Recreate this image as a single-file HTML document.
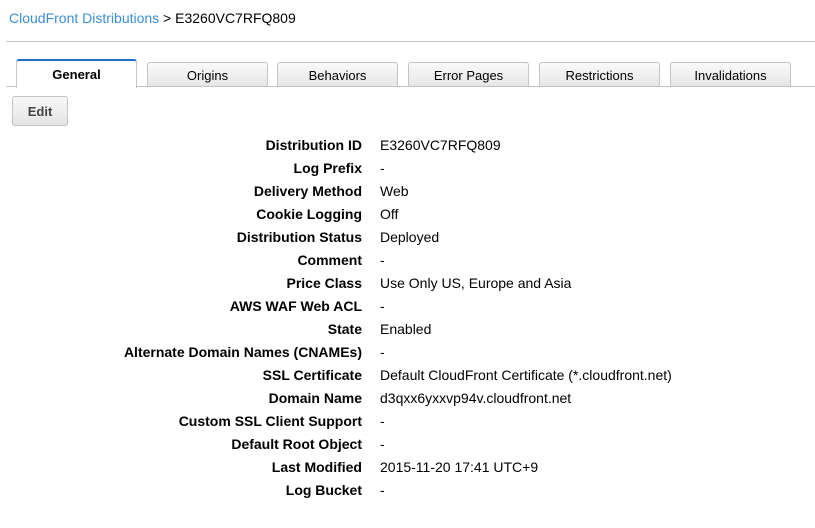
<!DOCTYPE html>
<html><head><meta charset="utf-8"><style>
body{margin:0;width:815px;height:528px;background:#fff;font-family:"Liberation Sans",Arial,sans-serif;font-size:14px;color:#000;position:relative;overflow:hidden}
.bc{position:absolute;left:9px;top:10px}
.bc a{color:#3a8fd8;text-decoration:none}
.hr{position:absolute;left:6px;right:0;top:41px;height:1px;background:#c4c4c4}
.tl{position:absolute;left:6px;right:0;top:86px;height:1px;background:#c4c4c4}
.tab{position:absolute;top:62px;height:23px;width:119px;border:1px solid #c4c4c4;border-bottom:none;border-radius:3px 3px 0 0;background:linear-gradient(#fafafa,#e6e6e6);text-align:center;line-height:25px;font-size:13px}
.tab.act{top:59px;height:27px;background:#fff;border-top:2px solid #1f6fc9;font-weight:bold;line-height:28px;z-index:2;width:119px}
.edit{position:absolute;left:12px;top:96px;width:54px;height:28px;border:1px solid #c4c4c4;border-radius:3px;background:linear-gradient(#f8f8f8,#e4e4e4);font-weight:bold;color:#444;text-align:center;line-height:29px;font-size:13px}
.row{position:absolute;left:0;width:815px;height:23px}
.row .l{position:absolute;right:453px;font-weight:bold;white-space:nowrap}
.row .v{position:absolute;left:380px;white-space:nowrap}
</style></head><body>
<div class="bc"><a>CloudFront Distributions</a> &gt; E3260VC7RFQ809</div>
<div class="hr"></div>
<div class="tab act" style="left:16px">General</div>
<div class="tab" style="left:147px">Origins</div>
<div class="tab" style="left:277px">Behaviors</div>
<div class="tab" style="left:408px">Error Pages</div>
<div class="tab" style="left:539px">Restrictions</div>
<div class="tab" style="left:670px">Invalidations</div>
<div class="tl"></div>
<div class="edit">Edit</div>
<div class="row" style="top:137px"><span class="l">Distribution ID</span><span class="v">E3260VC7RFQ809</span></div>
<div class="row" style="top:160px"><span class="l">Log Prefix</span><span class="v">-</span></div>
<div class="row" style="top:183px"><span class="l">Delivery Method</span><span class="v">Web</span></div>
<div class="row" style="top:206px"><span class="l">Cookie Logging</span><span class="v">Off</span></div>
<div class="row" style="top:229px"><span class="l">Distribution Status</span><span class="v">Deployed</span></div>
<div class="row" style="top:252px"><span class="l">Comment</span><span class="v">-</span></div>
<div class="row" style="top:275px"><span class="l">Price Class</span><span class="v">Use Only US, Europe and Asia</span></div>
<div class="row" style="top:298px"><span class="l">AWS WAF Web ACL</span><span class="v">-</span></div>
<div class="row" style="top:321px"><span class="l">State</span><span class="v">Enabled</span></div>
<div class="row" style="top:344px"><span class="l">Alternate Domain Names (CNAMEs)</span><span class="v">-</span></div>
<div class="row" style="top:367px"><span class="l">SSL Certificate</span><span class="v">Default CloudFront Certificate (*.cloudfront.net)</span></div>
<div class="row" style="top:390px"><span class="l">Domain Name</span><span class="v">d3qxx6yxxvp94v.cloudfront.net</span></div>
<div class="row" style="top:413px"><span class="l">Custom SSL Client Support</span><span class="v">-</span></div>
<div class="row" style="top:436px"><span class="l">Default Root Object</span><span class="v">-</span></div>
<div class="row" style="top:459px"><span class="l">Last Modified</span><span class="v">2015-11-20 17:41 UTC+9</span></div>
<div class="row" style="top:482px"><span class="l">Log Bucket</span><span class="v">-</span></div>
</body></html>
